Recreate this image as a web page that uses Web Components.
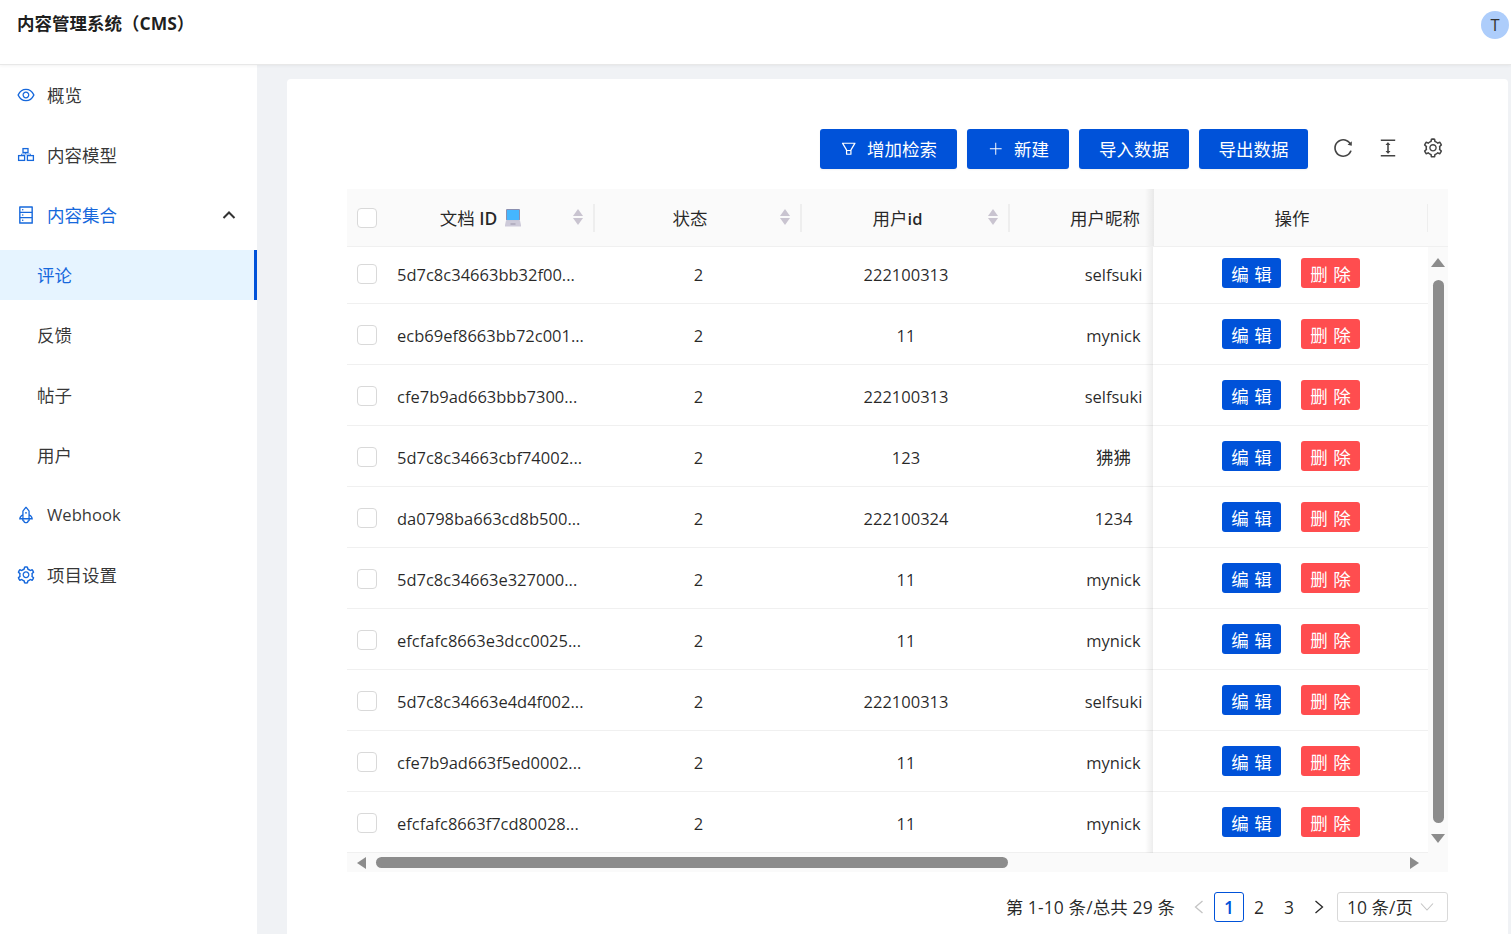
<!DOCTYPE html>
<html lang="zh"><head><meta charset="utf-8"><title>内容管理系统（CMS）</title>
<style>
html,body{margin:0;height:100%;overflow:hidden}
body{font:17.5px/1.5 "Open Sans","Noto Sans CJK SC",sans-serif;color:rgba(0,0,0,.85);background:#f0f2f5}
</style></head><body>
<cms-app></cms-app>
<script>
const P={
eye:"M942.2 486.2C847.4 286.5 704.1 186 512 186c-192.2 0-335.4 100.5-430.2 300.3a60.3 60.3 0 0 0 0 51.5C176.6 737.5 319.9 838 512 838c192.2 0 335.4-100.5 430.2-300.3 7.7-16.2 7.7-35 0-51.5zM512 766c-161.3 0-279.4-81.8-362.7-254C232.6 339.8 350.7 258 512 258c161.3 0 279.4 81.8 362.7 254C791.5 684.2 673.4 766 512 766zm-4-430c-97.2 0-176 78.8-176 176s78.8 176 176 176 176-78.8 176-176-78.8-176-176-176zm0 288c-61.9 0-112-50.1-112-112s50.1-112 112-112 112 50.1 112 112-50.1 112-112 112z",
database:"M832 64H192c-17.7 0-32 14.3-32 32v832c0 17.7 14.3 32 32 32h640c17.7 0 32-14.3 32-32V96c0-17.7-14.3-32-32-32zm-600 72h560v208H232V136zm560 480H232V408h560v208zm0 272H232V680h560v208zM304 240a40 40 0 1 0 80 0 40 40 0 1 0-80 0zm0 272a40 40 0 1 0 80 0 40 40 0 1 0-80 0zm0 272a40 40 0 1 0 80 0 40 40 0 1 0-80 0z",
rocket:"M864 736c0-111.6-65.4-208-160-252.9V317.3c0-15.1-5.3-29.7-15.1-41.2L536.5 95.4C530.1 87.8 521 84 512 84s-18.1 3.8-24.5 11.4L335.1 276.1a63.97 63.97 0 0 0-15.1 41.2v165.8C225.4 528 160 624.4 160 736h156.5c-2.3 7.2-3.5 15-3.5 23.8 0 22.1 7.6 43.7 21.4 60.8a97.2 97.2 0 0 0 43.1 30.6c23.1 54 75.6 88.8 134.5 88.8 29.1 0 57.3-8.6 81.4-24.8 23.6-15.8 41.9-37.9 53-64a97 97 0 0 0 43.1-30.5 97.52 97.52 0 0 0 21.4-60.8c0-8.4-1.1-16.4-3.1-23.8H864zM762.3 621.4c9.4 14.6 17 30.3 22.5 46.6H700V558.7a211.6 211.6 0 0 1 62.3 62.7zM388 483.1V318.8l124-147 124 147V668H388V483.1zM239.2 668c5.5-16.3 13.1-32 22.5-46.6 16.3-25.2 37.5-46.5 62.3-62.7V668h-84.8zm388.9 116.2c-5.2 3-11.2 4.2-17.1 3.4l-19.5-2.4-2.8 19.4c-5.4 37.9-38.4 66.5-76.7 66.5-38.3 0-71.3-28.6-76.7-66.5l-2.8-19.5-19.5 2.5a27.7 27.7 0 0 1-17.1-3.5c-8.7-5-14.1-14.3-14.1-24.4 0-10.6 5.9-19.4 14.6-23.4h231.3c8.8 4 14.6 12.8 14.6 23.4-.1 10.2-5.5 19.6-14.2 24.5zM464 400a48 48 0 1 0 96 0 48 48 0 1 0-96 0z",
setting:"M924.8 625.7l-65.5-56c3.1-19 4.7-38.4 4.7-57.8s-1.6-38.8-4.7-57.8l65.5-56a32.03 32.03 0 0 0 9.3-35.2l-.9-2.6a443.74 443.74 0 0 0-79.7-137.9l-1.8-2.1a32.12 32.12 0 0 0-35.1-9.5l-81.3 28.9c-30-24.6-63.5-44-99.7-57.6l-15.7-85a32.05 32.05 0 0 0-25.8-25.7l-2.7-.5c-52.1-9.4-106.9-9.4-159 0l-2.7.5a32.05 32.05 0 0 0-25.8 25.7l-15.8 85.4a351.86 351.86 0 0 0-99 57.4l-81.9-29.1a32 32 0 0 0-35.1 9.5l-1.8 2.1a446.02 446.02 0 0 0-79.7 137.9l-.9 2.6c-4.5 12.5-.8 26.5 9.3 35.2l66.3 56.6c-3.1 18.8-4.6 38-4.6 57.1 0 19.2 1.5 38.4 4.6 57.1L99 625.5a32.03 32.03 0 0 0-9.3 35.2l.9 2.6c18.1 50.4 44.9 96.9 79.7 137.9l1.8 2.1a32.12 32.12 0 0 0 35.1 9.5l81.9-29.1c29.8 24.5 63.1 43.9 99 57.4l15.8 85.4a32.05 32.05 0 0 0 25.8 25.7l2.7.5a449.4 449.4 0 0 0 159 0l2.7-.5a32.05 32.05 0 0 0 25.8-25.7l15.7-85a350 350 0 0 0 99.7-57.6l81.3 28.9a32 32 0 0 0 35.1-9.5l1.8-2.1c34.8-41.1 61.6-87.5 79.7-137.9l.9-2.6c4.5-12.3.8-26.3-9.3-35zM788.3 465.9c2.5 15.1 3.8 30.6 3.8 46.1s-1.3 31-3.8 46.1l-6.6 40.1 74.7 63.9a370.03 370.03 0 0 1-42.6 73.6L721 702.8l-31.4 25.8c-23.9 19.6-50.5 35-79.3 45.8l-38.1 14.3-17.9 97a377.5 377.5 0 0 1-85 0l-17.9-97.2-37.8-14.5c-28.5-10.8-55-26.2-78.7-45.7l-31.4-25.9-93.4 33.2c-17-22.9-31.2-47.6-42.6-73.6l75.5-64.5-6.5-40c-2.4-14.9-3.7-30.3-3.7-45.5 0-15.3 1.2-30.6 3.7-45.5l6.5-40-75.5-64.5c11.3-26.1 25.6-50.7 42.6-73.6l93.4 33.2 31.4-25.9c23.7-19.5 50.2-34.9 78.7-45.7l37.9-14.3 17.9-97.2c28.1-3.2 56.8-3.2 85 0l17.9 97 38.1 14.3c28.7 10.8 55.4 26.2 79.3 45.8l31.4 25.8 92.8-32.9c17 22.9 31.2 47.6 42.6 73.6L781.8 426l6.5 39.9zM512 326c-97.2 0-176 78.8-176 176s78.8 176 176 176 176-78.8 176-176-78.8-176-176-176zm79.2 255.2A111.6 111.6 0 0 1 512 614c-29.9 0-58-11.7-79.2-32.8A111.6 111.6 0 0 1 400 502c0-29.9 11.7-58 32.8-79.2C454 401.6 482.1 390 512 390c29.9 0 58 11.6 79.2 32.8A111.6 111.6 0 0 1 624 502c0 29.9-11.7 58-32.8 79.2z",
reload:"M909.1 209.3l-56.4 44.1C775.8 155.1 656.2 92 521.9 92 290 92 102.3 279.5 102 511.5 101.7 743.7 289.8 932 521.9 932c181.3 0 335.8-115 394.6-276.1 1.5-4.2-.7-8.9-4.9-10.3l-56.7-19.5a8 8 0 0 0-10.1 4.8c-1.8 5-3.8 10-5.9 14.9-17.3 41-42.1 77.8-73.7 109.4A344.77 344.77 0 0 1 655.9 829c-42.3 17.9-87.4 27-133.8 27-46.5 0-91.5-9.1-133.8-27A341.5 341.5 0 0 1 279 755.2a342.16 342.16 0 0 1-73.7-109.4c-17.9-42.4-27-87.4-27-133.9s9.1-91.5 27-133.9c17.3-41 42.1-77.8 73.7-109.4 31.6-31.6 68.4-56.4 109.3-73.8 42.3-17.9 87.4-27 133.8-27 46.5 0 91.5 9.1 133.8 27a341.5 341.5 0 0 1 109.3 73.8c9.9 9.9 19.2 20.4 27.8 31.4l-60.2 47a8 8 0 0 0 3 14.1l175.6 43c5 1.2 9.9-2.6 9.9-7.7l.8-180.9c-.1-6.6-7.8-10.3-13-6.2z",
height:"M840 836H184c-4.4 0-8 3.6-8 8v60c0 4.4 3.6 8 8 8h656c4.4 0 8-3.6 8-8v-60c0-4.4-3.6-8-8-8zm0-724H184c-4.4 0-8 3.6-8 8v60c0 4.4 3.6 8 8 8h656c4.4 0 8-3.6 8-8v-60c0-4.4-3.6-8-8-8zM610.8 378c6 0 9.4-7 5.7-11.7L515.7 238.7a7.14 7.14 0 0 0-11.3 0L403.6 366.3a7.23 7.23 0 0 0 5.7 11.7H476v268h-62.8c-6 0-9.4 7-5.7 11.7l100.8 127.5c2.9 3.7 8.5 3.7 11.3 0l100.8-127.5c3.7-4.7.4-11.7-5.7-11.7H548V378h62.8z",
filter:"M880.1 154H143.9c-24.5 0-39.8 26.7-27.5 48L349 597.4V838c0 17.7 14.2 32 31.8 32h262.4c17.6 0 31.8-14.3 31.8-32V597.4L907.7 202c12.2-21.3-3.1-48-27.6-48zM603.4 798H420.6V642h182.9v156zm9.6-236.6l-9.5 16.6h-183l-9.5-16.6L212.7 226h598.6L613 561.4z",
plus:"M484 168h56v688h-56zM168 484h688v56H168z"
};
const icon=(n,s,c)=>`<svg viewBox="0 0 1024 1024" width="${s}" height="${s}" fill="${c||'currentColor'}" aria-hidden="true"><path d="${P[n]}"/></svg>`;
const cluster=`<svg viewBox="0 0 20 20" width="20" height="20" fill="none" stroke="currentColor" stroke-width="1.3" aria-hidden="true"><rect x="7" y="3.6" width="5" height="3.9"/><path d="M9.5 7.5v1.5M5.5 10V9h9v1" stroke-width=".7"/><rect x="2.6" y="10.6" width="6" height="4.8"/><rect x="11.4" y="10.6" width="6" height="4.8"/></svg>`;
const def=(name,html,init)=>customElements.define(name,class extends HTMLElement{
  constructor(){super();this.attachShadow({mode:'open'})}
  connectedCallback(){this.shadowRoot.innerHTML=typeof html==='function'?html(this):html;init&&init(this)}
});

def('cms-header',`<style>
:host{display:flex;justify-content:space-between;height:64px;box-sizing:content-box;background:#fff;border-bottom:1px solid #e8e8e8;box-shadow:0 1px 3px rgba(0,0,0,.05);position:relative;z-index:2;padding:0 2px 0 17px}
h1{margin:9px 0 0;font-size:17.5px;font-weight:700;line-height:28px;color:rgba(0,0,0,.88)}
.av{width:28px;height:28px;margin-top:11px;border-radius:50%;background:#adcdfb;color:#333;font-size:16.5px;line-height:28px;text-align:center}
</style><h1>内容管理系统（CMS）</h1><div class="av">T</div>`);

def('nav-item',h=>{const a=h.hasAttribute('active'),s=h.hasAttribute('sub'),sel=h.hasAttribute('selected'),o=h.hasAttribute('open'),n=h.getAttribute('icon');
return `<style>
:host{display:flex;align-items:center;height:50px;margin-bottom:10px;font-size:${h.hasAttribute('latin')?16.6:17.5}px;line-height:50px;box-sizing:border-box;padding-left:${s?37:16}px;color:${a||sel?'#1668dc':'rgba(0,0,0,.8)'};${sel?'background:#e6f4ff;box-shadow:inset -3px 0 0 #0052d9;':''}}
.i{width:20px;height:20px;margin-right:11px;color:#1668dc;display:flex}
.c{margin-left:auto;margin-right:21px;display:flex;color:#333}
</style>${s?'':`<span class="i">${n=='cluster'?cluster:icon(n,20)}</span>`}<slot></slot>${o?`<span class="c"><svg width="14" height="10" viewBox="0 0 14 10" fill="none" stroke="currentColor" stroke-width="2" aria-hidden="true"><path d="M1.5 8 7 2.5 12.5 8"/></svg></span>`:''}`});

def('cms-sidebar',`<style>:host{display:block;width:257px;flex:none;background:#fff;padding-top:5px;box-sizing:border-box}</style><slot></slot>`);

def('tb-btn',h=>`<style>:host{display:inline-flex;align-items:center;justify-content:center;height:40px;box-sizing:border-box;background:#0052d9;color:#fff;font-size:17.5px;border-radius:3px;padding:0 20px;box-shadow:0 1px 2px rgba(0,0,0,.06)}
:host(:last-of-type){padding:0 19.5px}
span{display:flex;margin-right:9.5px}</style>${h.getAttribute('icon')?`<span>${icon(h.getAttribute('icon'),17.5)}</span>`:''}<slot></slot>`);

def('act-btn',h=>`<style>:host{display:inline-block;width:59px;height:30px;line-height:33px;border-radius:3px;text-align:center;color:#fff;font-size:17.5px;word-spacing:1px;background:${h.hasAttribute('danger')?'#ff4d4f':'#0052d9'}}</style><slot></slot>`);

def('check-box',`<style>:host{display:block;width:20px;height:20px;box-sizing:border-box;border:1px solid #d9d9d9;border-radius:4px;background:#fff}</style>`);

const laptop=`<svg width="17" height="18" viewBox="0 0 17 18" style="margin:0 3px 0 8px;flex:none" aria-hidden="true"><rect x="1" y="0" width="14" height="11.5" rx="1" fill="#8a8fb0"/><rect x="2" y="1" width="12" height="10" fill="#45b6fe"/><path d="M1 11.5h14l1 4.5v1.5H0V16z" fill="#cdcad9"/><path d="M5.5 14.5h5v1h-5z" fill="#9a97ab"/></svg>`;
const sorter=`<svg width="10" height="16" viewBox="0 0 10 16" style="display:block" aria-hidden="true"><path d="M5 0 10 7H0z" fill="#c9c4d0"/><path d="M5 16 0 9h10z" fill="#c9c4d0"/></svg>`;

def('table-head',`<style>
:host{display:grid;grid-template-columns:40px 208px 207px 208px 143px 275px 20px;height:58px;background:#fafafa;font-size:17.5px;box-sizing:border-box;border-bottom:1px solid #f0f0f0;position:relative}
.c{display:flex;align-items:center;position:relative}
.ck{padding:1px 0 0 10px}
.h{justify-content:center;padding-right:17px;box-sizing:border-box}
.h>span:first-child,.nick span,.t{position:relative;top:1px}
.b{font-weight:600;font-size:16.5px}
.B{font-weight:600}
.s{position:absolute;right:12px;top:20px}
.h::after{content:"";position:absolute;right:0;top:15px;height:28px;width:2px;background:#eee}
.nick{overflow:hidden}
.nick span{flex:none;width:207px;text-align:center;padding-right:17px;box-sizing:border-box}
.fix{justify-content:center;background:#fafafa;position:relative;padding-left:3px;box-sizing:border-box}
.fix::before{content:"";position:absolute;left:-8px;top:0;bottom:0;width:9px;background:linear-gradient(to right,rgba(0,0,0,0),rgba(0,0,0,.07))}
.fix::after{content:"";position:absolute;right:0;top:15px;height:28px;width:1px;background:#eee}
</style>
<div class="c ck"><check-box></check-box></div>
<div class="c h"><span>文档 <b class="B">ID</b></span>${laptop}<span class="s">${sorter}</span></div>
<div class="c h"><span>状态</span><span class="s">${sorter}</span></div>
<div class="c h"><span>用户<b class="b">id</b></span><span class="s">${sorter}</span></div>
<div class="c nick"><span>用户昵称</span></div>
<div class="c fix"><span class="t">操作</span></div><div></div>`);

def('table-row',h=>{const g=k=>h.getAttribute(k);return `<style>
:host{display:grid;grid-template-columns:40px 208px 207px 208px 143px 275px;height:61px;box-sizing:border-box;font-size:16.5px;border-bottom:1px solid #f0f0f0}
.c{display:flex;align-items:center;min-width:0;padding-top:5px;box-sizing:border-box}
.ck{padding:1px 0 0 10px}
.id{padding-left:10px;white-space:nowrap;overflow:hidden}
.m{justify-content:center}
.nick{overflow:hidden}
.nick span{flex:none;width:207px;text-align:center}
.nick .z{font-size:17.5px;position:relative;top:-1px}
.fix{justify-content:center;gap:20px;background:#fff;position:relative;padding:0 0 1px 1px;margin-bottom:-1px}
.fix::before{content:"";position:absolute;left:-8px;top:0;bottom:0;width:8px;background:linear-gradient(to right,rgba(0,0,0,0),rgba(0,0,0,.07))}
.fix::after{content:"";position:absolute;left:0;right:0;bottom:0;height:1px;background:#f0f0f0}
</style>
<div class="c ck"><check-box></check-box></div>
<div class="c id">${g('doc')}</div><div class="c m">2</div><div class="c m">${g('uid')}</div>
<div class="c nick"><span class="${/[^\x00-\x7f]/.test(g('nick'))?'z':''}">${g('nick')}</span></div>
<div class="c fix"><act-btn>编 辑</act-btn><act-btn danger>删 除</act-btn></div>`});

def('v-scroll',`<style>:host{display:block;flex:none;width:20px;background:#fafafa;position:relative}
i{position:absolute;display:block}
.u{left:3px;top:11px;border:7px solid transparent;border-top:0;border-bottom:9px solid #8c8c8c}
.t{left:5px;width:11px;top:33px;height:543px;border-radius:6px;background:#8c8c8c}
.d{left:3px;top:587px;border:7px solid transparent;border-bottom:0;border-top:9px solid #8c8c8c}</style><i class="u"></i><i class="t"></i><i class="d"></i>`);

def('h-scroll',`<style>:host{display:block;height:19px;background:#fafafa;position:relative}
i{position:absolute;display:block}
.l{left:10px;top:4px;border:6.5px solid transparent;border-left:0;border-right:9px solid #8c8c8c}
.t{left:29px;width:632px;top:4px;height:11px;border-radius:6px;background:#8c8c8c}
.r{left:1063px;top:4px;border:6.5px solid transparent;border-right:0;border-left:9px solid #8c8c8c}</style><i class="l"></i><i class="t"></i><i class="r"></i>`);

def('data-table',`<style>:host{display:block;margin-top:20px}
.b{display:flex;height:606px}
.w{flex:1;min-width:0;height:606px;overflow:hidden}
.in{margin-top:-4px}</style>
<table-head></table-head>
<div class="b"><div class="w"><div class="in"><slot></slot></div></div><v-scroll></v-scroll></div>
<h-scroll></h-scroll>`);

def('pager-bar',`<style>:host{display:flex;justify-content:flex-end;align-items:center;height:30px;margin-top:20px;font-size:17.5px}
.t{margin-right:9px;letter-spacing:.1px}
.a{width:30px;display:flex;align-items:center;justify-content:center}
.dis{color:#c4c4c4}
.p{width:30px;height:30px;line-height:30px;text-align:center;box-sizing:border-box}
.on{border:1px solid #0052d9;border-radius:3px;color:#0052d9;line-height:28px;font-weight:600}
.s{margin-left:3px;width:111px;height:30px;box-sizing:border-box;border:1px solid #d9d9d9;border-radius:3px;display:flex;align-items:center;padding:0 13px 0 9px;justify-content:space-between;white-space:nowrap}
.s svg{color:#c4c4c4}
</style>
<span class="t">第 1-10 条/总共 29 条</span>
<span class="a dis"><svg width="14" height="14" viewBox="0 0 14 14" fill="none" stroke="currentColor" stroke-width="1.3" aria-hidden="true"><path d="M10.5 1 3.5 7l7 6"/></svg></span>
<span class="p on">1</span><span class="p">2</span><span class="p">3</span>
<span class="a"><svg width="14" height="14" viewBox="0 0 14 14" fill="none" stroke="currentColor" stroke-width="1.3" aria-hidden="true"><path d="M3.5 1l7 6-7 6"/></svg></span>
<span class="s">10 条/页<svg width="14" height="14" viewBox="0 0 14 14" fill="none" stroke="currentColor" stroke-width="1.1" aria-hidden="true"><path d="M1 3.5 7 10l6-6.5"/></svg></span>`);

def('tool-bar',`<style>:host{display:flex;align-items:center;justify-content:flex-end;height:40px;gap:10px;color:#444}
.ic{display:flex;gap:23px;margin:0 4px 2px 14px}</style>
<tb-btn icon="filter">增加检索</tb-btn><tb-btn icon="plus">新建</tb-btn><tb-btn>导入数据</tb-btn><tb-btn>导出数据</tb-btn>
<div class="ic">${icon('reload',22)}${icon('height',22)}${icon('setting',22)}</div>`);

const rows=[["5d7c8c34663bb32f00...","222100313","selfsuki"],["ecb69ef8663bb72c001...","11","mynick"],["cfe7b9ad663bbb7300...","222100313","selfsuki"],["5d7c8c34663cbf74002...","123","狒狒"],["da0798ba663cd8b500...","222100324","1234"],["5d7c8c34663e327000...","11","mynick"],["efcfafc8663e3dcc0025...","11","mynick"],["5d7c8c34663e4d4f002...","222100313","selfsuki"],["cfe7b9ad663f5ed0002...","11","mynick"],["efcfafc8663f7cd80028...","11","mynick"]];

def('cms-app',`<style>
:host{display:flex;flex-direction:column;height:934px;overflow:hidden}
.m{display:flex;flex:1;min-height:0}
.card{flex:none;width:1221px;margin:14px 0 0 30px;background:#fff;border-radius:4px 4px 0 0;padding:50px 60px 0;box-sizing:border-box}
</style>
<cms-header></cms-header>
<div class="m">
<cms-sidebar>
<nav-item icon="eye">概览</nav-item>
<nav-item icon="cluster">内容模型</nav-item>
<nav-item icon="database" active open>内容集合</nav-item>
<nav-item sub selected>评论</nav-item>
<nav-item sub>反馈</nav-item>
<nav-item sub>帖子</nav-item>
<nav-item sub>用户</nav-item>
<nav-item icon="rocket" latin>Webhook</nav-item>
<nav-item icon="setting">项目设置</nav-item>
</cms-sidebar>
<div class="card">
<tool-bar></tool-bar>
<data-table>${rows.map(r=>`<table-row doc="${r[0]}" uid="${r[1]}" nick="${r[2]}"></table-row>`).join('')}</data-table>
<pager-bar></pager-bar>
</div></div>`);
</script>
</body></html>
